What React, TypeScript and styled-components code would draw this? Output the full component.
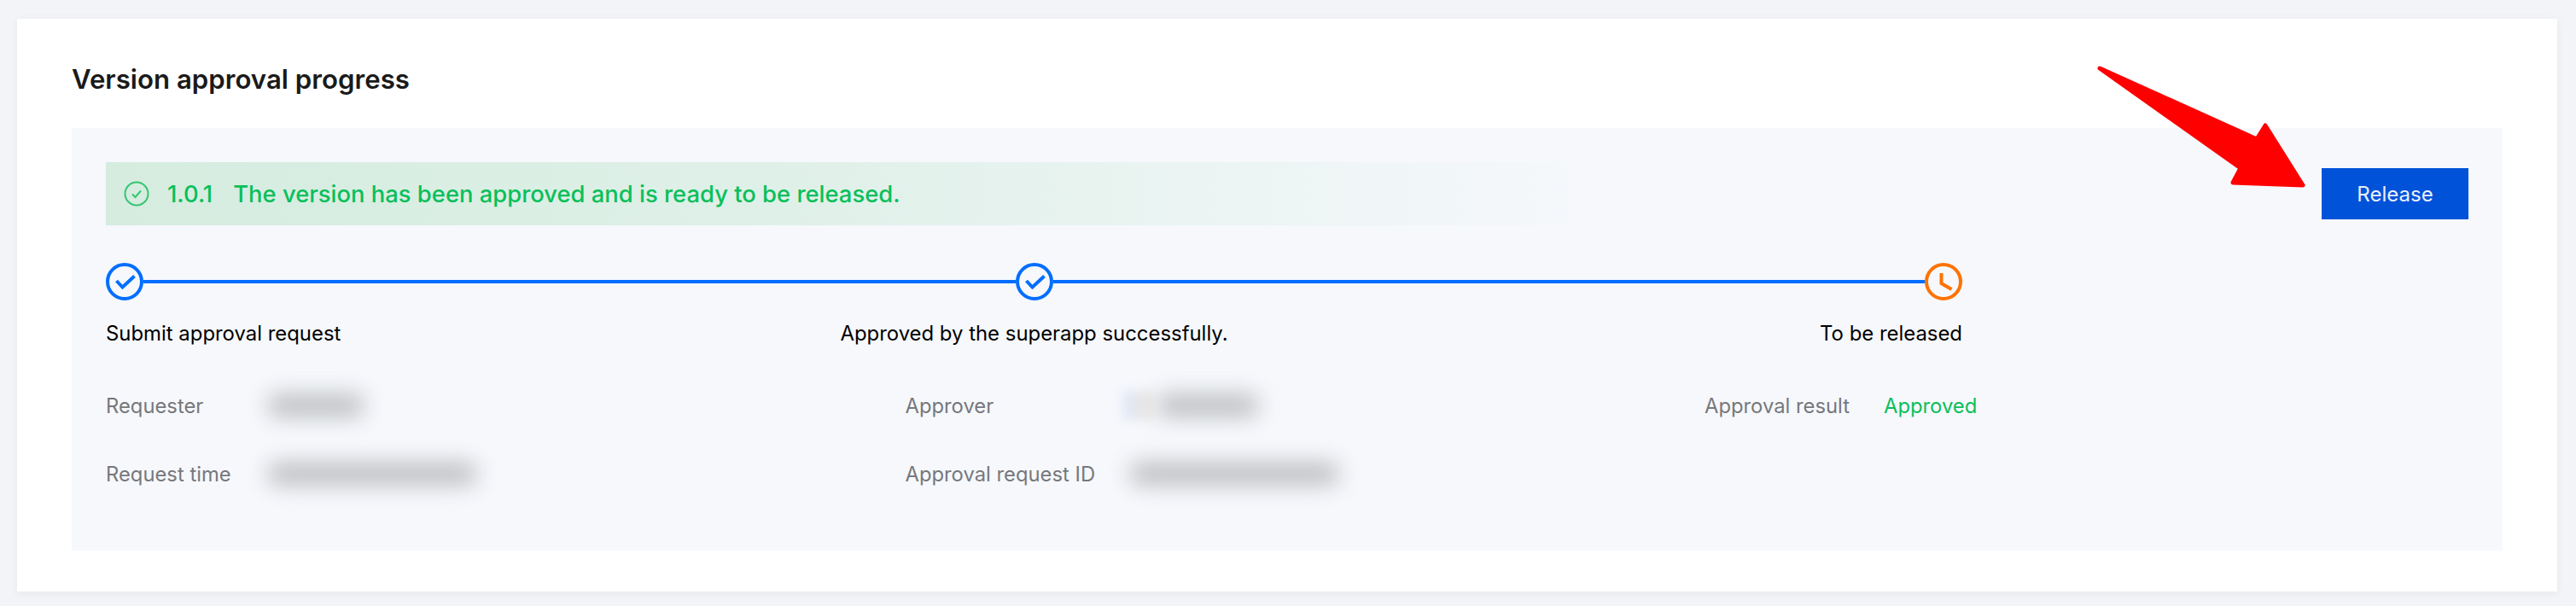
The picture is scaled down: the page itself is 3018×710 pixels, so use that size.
import styled, { createGlobalStyle } from 'styled-components';

const GlobalStyle = createGlobalStyle`
	html, body {
		margin: 0;
		padding: 0;
		background: #f3f4f7;
		font-family: Inter, "Noto Sans", "Liberation Sans", sans-serif;
	}
	* {
		box-sizing: border-box;
	}
`;

const Page = styled.div`
	position: relative;
	width: 3018px;
	height: 710px;
	padding: 22px 22px 17px 20px;
	overflow: hidden;
`;

const Card = styled.section`
	height: 671px;
	padding: 48px 64px 0;
	background: #ffffff;
	box-shadow: 0 2px 10px rgba(30, 40, 70, 0.06);
`;

const Title = styled.h2`
	margin: 0 0 44px;
	height: 36px;
	font-size: 31.2px;
	line-height: 46px;
	font-weight: 600;
	color: #1a1a1a;
`;

const Panel = styled.div`
	display: flex;
	justify-content: space-between;
	align-items: flex-start;
	height: 495px;
	padding: 40px;
	background: #f6f8fc;
`;

const Content = styled.div`
	flex: 1;
	min-width: 0;
`;

const Banner = styled.div`
	display: flex;
	align-items: center;
	width: 1740px;
	height: 74px;
	padding-left: 21px;
	background: linear-gradient(90deg, #d5ecdf 0%, #dff0e8 45%, rgba(246, 248, 252, 0) 100%);
	color: #0abf5b;
	font-size: 27.4px;
	font-weight: 500;
`;

const BannerIcon = styled.svg`
	width: 30px;
	height: 30px;
	margin-right: 21px;
	flex-shrink: 0;
`;

const Version = styled.span`
	margin-right: 24px;
`;

const Steps = styled.div`
	width: 2175px;
	margin-top: 44px;
`;

const Track = styled.div`
	display: flex;
	align-items: center;
`;

const StepIcon = styled.svg`
	width: 44px;
	height: 44px;
	flex-shrink: 0;
	display: block;
`;

const TrackLine = styled.div`
	flex: 1;
	height: 4px;
	background: #006eff;
`;

const StepLabels = styled.div`
	display: grid;
	grid-template-columns: 1fr auto 1fr;
	margin-top: 21px;
`;

const StepLabel = styled.div<{ $align?: string }>`
	font-size: 23.9px;
	line-height: 36px;
	color: #000000;
	white-space: nowrap;
	text-align: ${({ $align }) => $align || 'left'};
`;

const InfoGrid = styled.div`
	display: grid;
	grid-template-columns: repeat(3, 936.5px);
	row-gap: 44px;
	margin-top: 48px;
`;

const InfoItem = styled.div`
	display: flex;
	align-items: center;
	height: 36px;
	font-size: 23.8px;
`;

const InfoLabel = styled.span<{ $width: number }>`
	width: ${({ $width }) => $width}px;
	flex-shrink: 0;
	color: #77787c;
	white-space: nowrap;
`;

const InfoValue = styled.span`
	color: #0abf5b;
`;

const BlurValue = styled.div<{ $width: number; $inset?: number }>`
	width: ${({ $width }) => $width}px;
	height: 26px;
	margin-left: ${({ $inset }) => $inset || 0}px;
	background: #bcbdc0;
	border-radius: 10px;
	filter: blur(13px);
`;

const BlurAvatar = styled.div`
	width: 34px;
	height: 34px;
	flex-shrink: 0;
	background: linear-gradient(90deg, #dfe6f8, #eee9e2);
	filter: blur(6px);
`;

const ReleaseButton = styled.button`
	width: 172px;
	height: 60px;
	margin-top: 7px;
	flex-shrink: 0;
	border: none;
	border-radius: 0;
	background: #0052d9;
	color: #e9f0fd;
	font-family: inherit;
	font-size: 24px;
`;

const ArrowOverlay = styled.svg`
	position: absolute;
	top: 0;
	left: 0;
	width: 3018px;
	height: 710px;
	pointer-events: none;
`;

const CheckStep = () => (
	<StepIcon viewBox="0 0 44 44" fill="none">
		<circle cx="22" cy="22" r="20" stroke="#006eff" strokeWidth="4" />
		<path d="M12.5 21 L19.5 28.5 L33.5 15.5" stroke="#006eff" strokeWidth="4" />
	</StepIcon>
);

const ClockStep = () => (
	<StepIcon viewBox="0 0 44 44" fill="none">
		<circle cx="22" cy="22" r="20" stroke="#ff7200" strokeWidth="4" />
		<path d="M19.5 12 V24 L31.5 31" stroke="#ff7200" strokeWidth="4" />
	</StepIcon>
);

const App = () => {
	return (
		<Page>
			<GlobalStyle />
			<Card>
				<Title>Version approval progress</Title>
				<Panel>
					<Content>
						<Banner>
							<BannerIcon viewBox="0 0 30 30" fill="none">
								<circle cx="15" cy="15" r="13.5" stroke="#35c572" strokeWidth="2" />
								<path d="M10 15.5 L13.5 19 L20 11.5" stroke="#35c572" strokeWidth="2" />
							</BannerIcon>
							<Version>1.0.1</Version>
							The version has been approved and is ready to be released.
						</Banner>
						<Steps>
							<Track>
								<CheckStep />
								<TrackLine />
								<CheckStep />
								<TrackLine />
								<ClockStep />
							</Track>
							<StepLabels>
								<StepLabel>Submit approval request</StepLabel>
								<StepLabel>Approved by the superapp successfully.</StepLabel>
								<StepLabel $align="right">To be released</StepLabel>
							</StepLabels>
						</Steps>
						<InfoGrid>
							<InfoItem>
								<InfoLabel $width={182}>Requester</InfoLabel>
								<BlurValue $width={112} $inset={8} />
							</InfoItem>
							<InfoItem>
								<InfoLabel $width={255}>Approver</InfoLabel>
								<BlurAvatar />
								<BlurValue $width={118} $inset={6} />
							</InfoItem>
							<InfoItem>
								<InfoLabel $width={210}>Approval result</InfoLabel>
								<InfoValue>Approved</InfoValue>
							</InfoItem>
							<InfoItem>
								<InfoLabel $width={182}>Request time</InfoLabel>
								<BlurValue $width={244} $inset={8} />
							</InfoItem>
							<InfoItem>
								<InfoLabel $width={255}>Approval request ID</InfoLabel>
								<BlurValue $width={244} $inset={8} />
							</InfoItem>
						</InfoGrid>
					</Content>
					<ReleaseButton>Release</ReleaseButton>
				</Panel>
			</Card>
			<ArrowOverlay viewBox="0 0 3018 710">
				<path
					d="M2460 80 L2644 163 L2654 147 L2698 217 L2616 214 L2625 197 Z"
					fill="#ff0000"
					stroke="#ff0000"
					strokeWidth="5"
					strokeLinejoin="round"
				/>
			</ArrowOverlay>
		</Page>
	);
};

export default App;
